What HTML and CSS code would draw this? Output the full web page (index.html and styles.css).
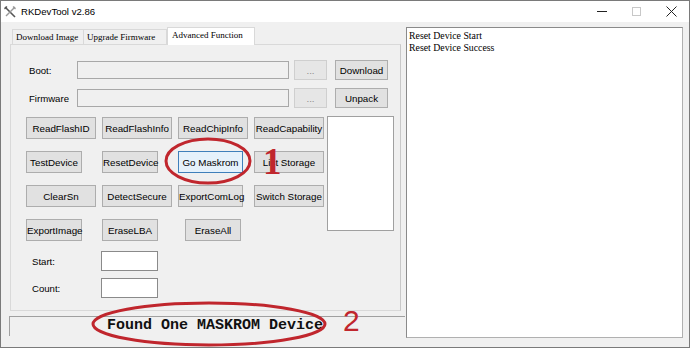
FILE: index.html
```html
<!DOCTYPE html>
<html>
<head>
<meta charset="utf-8">
<link rel="stylesheet" href="styles.css">
</head>
<body>
<div class="window">
  <div class="titlebar">
    <svg class="appicon" width="12" height="12" viewBox="0 0 12 12">
      <path d="M1 1 L11 11" stroke="#555" stroke-width="1.6"/>
      <path d="M11 1 L2 10" stroke="#999" stroke-width="1.4"/>
      <path d="M0.5 3 L3 0.5" stroke="#555" stroke-width="1.2"/>
      <path d="M9 0.5 L11.5 3" stroke="#999" stroke-width="1.2"/>
    </svg>
    <span class="title">RKDevTool v2.86</span>
    <div class="controls">
      <span class="ctl"><span class="min"></span></span>
      <span class="ctl"><span class="max"></span></span>
      <span class="ctl">
        <svg width="11" height="11" viewBox="0 0 11 11"><path d="M0.5 0.5 L10.5 10.5 M10.5 0.5 L0.5 10.5" stroke="#222" stroke-width="1"/></svg>
      </span>
    </div>
  </div>
  <div class="main">
    <div class="left">
      <div class="tabs">
        <div class="tab t1">Download Image</div>
        <div class="tab t2">Upgrade Firmware</div>
        <div class="tab t3 active">Advanced Function</div>
      </div>
      <div class="panel">
        <div class="filerow">
          <span class="lbl">Boot:</span>
          <div class="path"></div>
          <button class="btn dots">...</button>
          <button class="btn act">Download</button>
        </div>
        <div class="filerow">
          <span class="lbl">Firmware</span>
          <div class="path"></div>
          <button class="btn dots">...</button>
          <button class="btn act">Unpack</button>
        </div>
        <div class="cmd">
          <div class="grid">
            <button class="btn">ReadFlashID</button>
            <button class="btn">ReadFlashInfo</button>
            <button class="btn">ReadChipInfo</button>
            <button class="btn">ReadCapability</button>
            <button class="btn narrow">TestDevice</button>
            <button class="btn narrow">ResetDevice</button>
            <button class="btn mid focus">Go Maskrom</button>
            <button class="btn">List Storage</button>
            <button class="btn">ClearSn</button>
            <button class="btn">DetectSecure</button>
            <button class="btn mid">ExportComLog</button>
            <button class="btn">Switch Storage</button>
            <button class="btn narrow">ExportImage</button>
            <button class="btn narrow">EraseLBA</button>
            <button class="btn narrow center">EraseAll</button>
          </div>
          <div class="listbox"></div>
        </div>
        <div class="lba">
          <div class="lbarow"><span class="lbl2">Start:</span><div class="num"></div></div>
          <div class="lbarow"><span class="lbl2">Count:</span><div class="num"></div></div>
        </div>
      </div>
      <div class="status">Found One MASKROM Device</div>
    </div>
    <div class="log">Reset Device Start<br>Reset Device Success</div>
  </div>
  <svg class="marks" width="690" height="348" viewBox="0 0 690 348">
    <ellipse cx="208" cy="161" rx="42" ry="22" fill="none" stroke="#c0262d" stroke-width="3"/>
    <ellipse cx="209" cy="324" rx="116" ry="21" fill="none" stroke="#c0262d" stroke-width="3"/>
    <text x="263" y="174" class="n1">1</text>
    <text x="343" y="331" class="n2">2</text>
  </svg>
</div>
</body>
</html>
```

FILE: styles.css
```css
* { box-sizing: border-box; }
html, body { margin: 0; padding: 0; }
body { width: 690px; height: 348px; overflow: hidden; background: #f0f0f0; }

.window {
  position: relative;
  width: 690px;
  height: 348px;
  border: 1px solid #7a7a7a;
  background: #f0f0f0;
  font-family: "Liberation Sans", Arial, sans-serif;
}

.titlebar {
  height: 21px;
  background: #fff;
  display: flex;
  align-items: center;
  padding-left: 3px;
}
.appicon { margin-right: 5px; margin-top: 1px; }
.title { font-size: 9.6px; color: #000; }
.controls { margin-left: auto; display: flex; height: 21px; }
.ctl { width: 35px; display: flex; align-items: center; justify-content: center; }
.min { width: 10px; height: 1px; background: #222; }
.max { width: 9px; height: 9px; border: 1px solid #c8c8c8; }

.main {
  display: flex;
  padding: 5px 0 0 8px;
}
.left { width: 396px; display: flex; flex-direction: column; }

.tabs {
  display: flex;
  height: 17px;
  padding-left: 3px;
  align-items: flex-end;
  position: relative;
  z-index: 1;
}
.tab {
  font-family: "Liberation Serif", "Times New Roman", serif;
  font-size: 9px;
  white-space: nowrap;
  overflow: hidden;
  height: 15px;
  line-height: 14px;
  border: 1px solid #d9d9d9;
  border-bottom: none;
  background: #f0f0f0;
  padding-left: 3px;
  color: #000;
}
.t1 { width: 72px; }
.t2 { width: 83px; border-left: none; }
.t3 { width: 88px; }
.tab.active {
  height: 18px;
  background: #fff;
  line-height: 15px;
  padding-left: 4px;
  margin-bottom: -1px;
}

.panel {
  margin-left: 1px;
  width: 391px;
  height: 267px;
  border: 1px solid #d9d9d9;
  border-right-color: #c8c8c8;
  padding: 15px 0 0 15px;
  font-size: 9.6px;
}

.filerow {
  display: flex;
  align-items: center;
  height: 20px;
  margin-bottom: 8px;
  padding-left: 3px;
}
.lbl { width: 48px; color: #000; }
.path {
  width: 212px;
  height: 18px;
  border: 1px solid #a8a8a8;
  background: #f0f0f0;
}

.btn {
  font-family: "Liberation Sans", Arial, sans-serif;
  font-size: 9.8px;
  height: 22px;
  padding: 0;
  margin: 0;
  background: #e1e1e1;
  border: 1px solid #adadad;
  color: #000;
  white-space: nowrap;
}
.dots {
  width: 33px;
  height: 20px;
  margin-left: 5px;
  background: #e6e6e6;
  border-color: #cfcfcf;
  color: #8d8d8d;
}
.act { width: 53px; height: 20px; margin-left: 8px; }

.cmd { display: flex; gap: 3px; margin-top: 2px; height: 125px; align-items: flex-start; }
.grid {
  display: grid;
  grid-template-columns: repeat(4, 70px);
  grid-auto-rows: 22px;
  column-gap: 6px;
  row-gap: 12px;
  padding-top: 1px;
}
.grid .btn { width: 70px; }
.grid .btn.narrow { width: 56px; }
.grid .btn.mid { width: 65px; }
.grid .btn.center { justify-self: center; }
.btn.focus { background: #e5f1fb; border-color: #3f7fba; }

.listbox {
  width: 67px;
  height: 115px;
  background: #fff;
  border: 1px solid #a0a0a0;
}

.lba { margin-top: 10px; display: flex; flex-direction: column; gap: 7px; padding-left: 6px; }
.lbarow { display: flex; align-items: center; height: 20px; }
.lbl2 { width: 69px; }
.num { width: 57px; height: 20px; background: #fff; border: 1px solid #8a8a8a; }

.status {
  margin-top: 5px;
  height: 20px;
  border-top: 1px solid #a0a0a0;
  border-left: 1px solid #a0a0a0;
  font-family: "Liberation Mono", "Courier New", monospace;
  font-weight: bold;
  font-size: 15px;
  line-height: 18px;
  padding-left: 97px;
  color: #111;
}

.log {
  margin-left: 1px;
  width: 277px;
  height: 311px;
  background: #fff;
  border: 1px solid #8a8a8a;
  border-right-color: #b0b0b0;
  border-bottom-color: #b0b0b0;
  padding: 2px 0 0 2px;
  font-family: "Liberation Serif", "Times New Roman", serif;
  font-size: 9.8px;
  line-height: 12px;
  color: #000;
}

.marks { position: absolute; left: -1px; top: -1px; pointer-events: none; }
.n1 { font-family: "Liberation Serif", serif; font-weight: bold; font-size: 37px; fill: #c0262d; }
.n2 { font-family: "Liberation Sans", sans-serif; font-size: 30px; fill: #c0262d; }
```
